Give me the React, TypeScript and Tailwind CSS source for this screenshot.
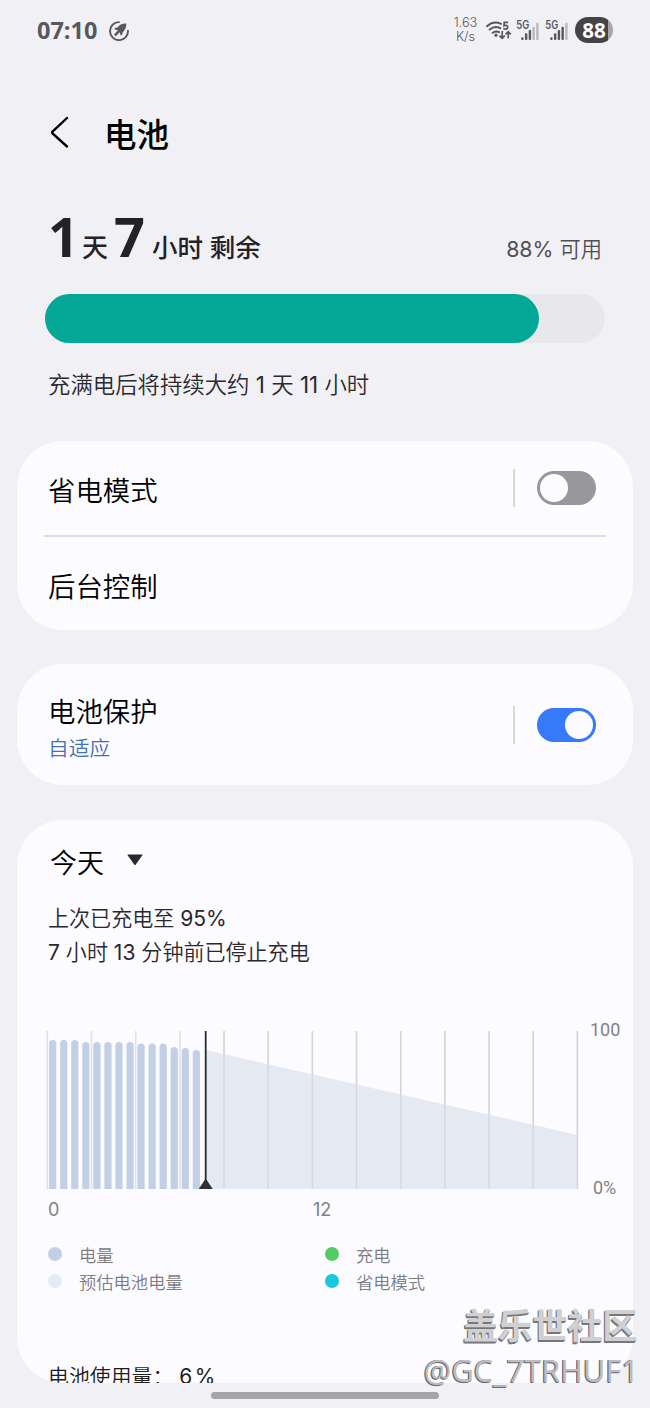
import React from "react";

const LEVEL_TOPS = [9, 9, 9, 11, 11, 11, 11, 11, 12.5, 12.5, 12.5, 16, 17, 19];
const GRID = Array.from({ length: 13 }, (_, i) => i);

function StatusBar() {
  return (
    <div className="flex h-[60px] items-center pl-[37px] pr-[37px] text-[#58585c]">
      <span className="w-[72px] font-['Open_Sans'] text-[23.5px] font-bold leading-[60px]">07:10</span>
      <svg className="mt-[2px] h-[20px] w-[20px]" viewBox="0 0 20 20" fill="none">
        <path d="M10 1.1A9 9 0 1 0 19 9.8" stroke="currentColor" strokeWidth="1.9" strokeLinecap="round" />
        <path d="M17.3 2.6C12.9 2.5 10.2 4.2 8.6 6.4L6.2 6.7L5.4 8.4L8 9L11 12L11.6 14.6L13.3 13.6L13.7 11.3C15.8 9.6 17.4 6.8 17.3 2.6Z" fill="currentColor" />
        <path d="M9 11.2L6.6 13.6" stroke="currentColor" strokeWidth="2.6" strokeLinecap="round" />
      </svg>
      <div className="ml-auto flex items-center">
        <div className="mr-[8px] w-[25px] text-center font-['Inter'] text-[12.7px] leading-[14px]">
          <div className="whitespace-nowrap">1.63</div>
          <div>K/s</div>
        </div>
        <svg className="mr-[4px] h-[20px] w-[26px]" viewBox="0 0 26 20" fill="none" stroke="currentColor">
          <path d="M1 6.2C5 2.6 10.5 1.9 15 3.8M3.7 9.6C6.8 7 10.8 6.5 14.3 8.2M6.7 12.8C8.6 11.3 11 11.1 13 12.2" strokeWidth="2" strokeLinecap="round" />
          <circle cx="10" cy="15.2" r="1.6" fill="currentColor" stroke="none" />
          <path d="M22 2.4H18.3L18 5.7C20 4.7 21.9 5.7 21.7 7.4C21.5 9.3 19 9.6 17.4 8.4" strokeWidth="1.7" />
          <path d="M16.2 11V18M13.5 15.6L16.2 18.3L18.8 15.6M22.2 18.3V12M19.6 14.3L22.2 11.7L24.9 14.3" strokeWidth="1.7" />
        </svg>
        <Signal strong={3} />
        <Signal strong={4} />
        <div className="ml-[1px] flex h-[26px] w-[38px] items-center justify-center overflow-hidden rounded-full bg-[linear-gradient(to_right,#444448_88%,#a5a5a9_88%)] font-['Open_Sans'] text-[20.5px] font-bold leading-[26px] text-white">
          88
        </div>
      </div>
    </div>
  );
}

function Signal({ strong }: { strong: number }) {
  return (
    <svg className="mr-[4px] h-[22px] w-[25px]" viewBox="0 0 25 22">
      <text x="0.3" y="9.8" textLength="13" lengthAdjust="spacingAndGlyphs" className="font-['Inter'] text-[11.5px] font-semibold" fill="currentColor">5G</text>
      {[0, 1, 2, 3, 4].map((i) => {
        const h = [2.7, 6.7, 10, 13.3, 17.3][i];
        return <rect key={i} x={5.2 + i * 3.75} y={21 - h} width="2.4" height={h} rx="1" fill={i < strong ? "#58585c" : "#b9b9bd"} />;
      })}
    </svg>
  );
}

function Toggle({ on }: { on?: boolean }) {
  return (
    <div className="flex items-center">
      <div className="mr-[22px] h-[38px] w-[2px] bg-[#d7d7dc]" />
      <div className={on ? "flex h-[34px] w-[59px] items-center justify-end rounded-full bg-[#3679fb] p-[3px]" : "flex h-[34px] w-[59px] items-center rounded-full bg-[#98979c] p-[3px]"}>
        <div className="h-[28px] w-[28px] rounded-full bg-[#fcfbff]" />
      </div>
    </div>
  );
}

function Chart() {
  return (
    <svg className="block h-[160px] w-[534px]" viewBox="0 0 534 160">
      {GRID.map((i) => (
        <rect key={i} x={0.6 + i * 44.17} y="0" width="1.5" height="158" fill="#e0e0e5" />
      ))}
      <path d="M160 19L531.5 104V158H160Z" fill="#e4e9f2" />
      {GRID.slice(4).map((i) => (
        <rect key={i} x={0.6 + i * 44.17} y="0" width="1.5" height="158" fill="#c9cdd6" fillOpacity="0.6" />
      ))}
      {LEVEL_TOPS.map((y, i) => {
        const x = 3.1 + i * 11.05;
        return <path key={i} d={`M${x} 158V${y + 3.5}a3.6 3.6 0 0 1 7.2 0V158Z`} fill="#c1d0e5" />;
      })}
      <rect x="158.8" y="0" width="1.8" height="158" fill="#2a2a2f" />
      <path d="M152.7 158L159.7 147.5L166.7 158Z" fill="#2f2f35" />
    </svg>
  );
}

function Legend({ dot, label }: { dot: string; label: string }) {
  return (
    <div className="flex h-[27px] w-[277px] items-center">
      <span className={`mr-[17px] h-[14px] w-[14px] rounded-full ${dot}`} />
      <span className="pt-[4px] text-[17.3px] leading-[24px] text-[#7d7c82]">{label}</span>
    </div>
  );
}

function Num({ children }: { children: React.ReactNode }) {
  return <span className="font-normal">{children}</span>;
}

export default function App() {
  return (
    <div className="relative h-[1408px] w-[650px] overflow-hidden bg-[#f1f0f5] font-['Inter','Noto_Sans_CJK_SC',sans-serif] font-[350] text-black">
      <StatusBar />

      <header className="flex h-[146px] items-center pl-[50px]">
        <svg className="h-[32px] w-[20px]" viewBox="0 0 20 32" fill="none" stroke="black" strokeWidth="2.4" strokeLinecap="round" strokeLinejoin="round">
          <path d="M17 1L2.5 14.7Q1.7 15.5 2.5 16.3L17 29.5" />
        </svg>
        <h1 className="ml-[34px] pt-[6px] text-[32.5px] font-medium leading-[40px]">电池</h1>
      </header>

      <section className="flex h-[62px] items-baseline pl-[48px] pr-[48px] text-[#232227]">
        <span className="w-[34px] font-['Open_Sans'] text-[54px] font-bold leading-[61px]">1</span>
        <span className="w-[32px] text-[26px] font-medium">天</span>
        <span className="w-[38px] font-['Open_Sans'] text-[54px] font-bold leading-[61px]">7</span>
        <span className="whitespace-nowrap text-[25.5px] font-medium">小时 剩余</span>
        <span className="ml-auto text-[21.3px] text-[#504f54]"><Num>88%</Num> 可用</span>
      </section>

      <div className="ml-[45px] mt-[26px] h-[49px] w-[560px] rounded-full bg-[#e8e8ec]">
        <div className="h-[49px] w-[494px] rounded-full bg-[#03a996]" />
      </div>
      <p className="ml-[48px] mt-[25px] h-[34px] whitespace-nowrap text-[22.4px] leading-[34px] text-[#2a292e]">
        充满电后将持续大约 <Num>1</Num> 天 <Num>11</Num> 小时
      </p>

      <section className="mx-[17px] mt-[39px] h-[189px] rounded-[46px] bg-[#fcfbff] pl-[27px] pr-[27px]">
        <div className="flex h-[96px] items-center justify-between border-b-2 border-[#dddce2] pl-[4px] pr-[10px]">
          <span className="pt-[5px] text-[27.4px] leading-[40px]">省电模式</span>
          <Toggle />
        </div>
        <div className="flex h-[96px] items-center pl-[4px] pt-[3px] text-[27.4px] leading-[40px]">后台控制</div>
      </section>

      <section className="mx-[17px] mt-[34px] flex h-[121px] items-center justify-between rounded-[46px] bg-[#fcfbff] pl-[31px] pr-[37px]">
        <div className="pt-[10px]">
          <div className="text-[27.4px] leading-[38px]">电池保护</div>
          <div className="text-[20.7px] leading-[36px] text-[#4272b4]">自适应</div>
        </div>
        <Toggle on />
      </section>

      <section className="mx-[17px] mt-[35px] h-[563px] overflow-hidden rounded-[46px] bg-[#fcfbff] pl-[31px] pt-[22px]">
        <div className="flex h-[40px] items-center pl-[2px]">
          <span className="pt-[4px] text-[27px] leading-[40px]">今天</span>
          <svg className="-mt-[4px] ml-[23px] h-[12px] w-[16px]" viewBox="0 0 16 12">
            <path d="M1 0.5H15Q15.8 .6 15.2 1.5L8.8 10.6Q8 11.6 7.2 10.6L.8 1.5Q.2 .6 1 .5Z" fill="#29282e" />
          </svg>
        </div>
        <div className="mt-[20px] whitespace-nowrap text-[21.05px] leading-[34px] text-[#29282e]">
          <div>上次已充电至 <Num>95%</Num></div>
          <div><Num>7</Num> 小时 <Num>13</Num> 分钟前已停止充电</div>
        </div>
        <div className="-ml-[2px] mt-[61px] flex h-[160px]">
          <Chart />
          <div className="-mt-[12px] ml-[10px] flex h-[180px] flex-col justify-between font-['Roboto'] text-[18px] font-normal leading-[22px] text-[#828187]">
            <span>100</span>
            <span className="pl-[3px]">0%</span>
          </div>
        </div>
        <div className="mt-[6px] flex h-[26px] font-['Inter'] text-[18px] font-normal leading-[26px] text-[#828187]">
          <span className="w-[265px]">0</span>
          <span>12</span>
        </div>
        <div className="mt-[17px] flex w-[560px] flex-wrap">
          <Legend dot="bg-[#c1d0e5]" label="电量" />
          <Legend dot="bg-[#55cb68]" label="充电" />
          <Legend dot="bg-[#e4ebf3]" label="预估电池电量" />
          <Legend dot="bg-[#17c8df]" label="省电模式" />
        </div>
        <p className="mt-[66px] whitespace-nowrap text-[20.9px] leading-[34px] text-[#1d1c21]">
          电池使用量： <span className="font-normal tracking-[2.5px]">6%</span>
        </p>
      </section>

      <div className="absolute left-[211px] top-[1392px] h-[7px] w-[228px] rounded-full bg-[#a5a4a9]" />
      <div className="absolute right-[13px] top-[1306px] whitespace-nowrap text-right">
        <div className="text-[34.8px] font-bold leading-[40px] text-[#d0d0d2] [text-shadow:-1px_1px_0_#77777a,0_1px_0_#77777a,-1px_2px_0_#77777a]">盖乐世社区</div>
        <div className="-mr-[2px] mt-[3px] font-['Open_Sans'] text-[30.8px] font-normal leading-[42px] text-[#bdbdc0] [text-shadow:-1px_0_0_#68686b,-1px_1px_0_#68686b]">@GC_7TRHUF1</div>
      </div>
    </div>
  );
}
